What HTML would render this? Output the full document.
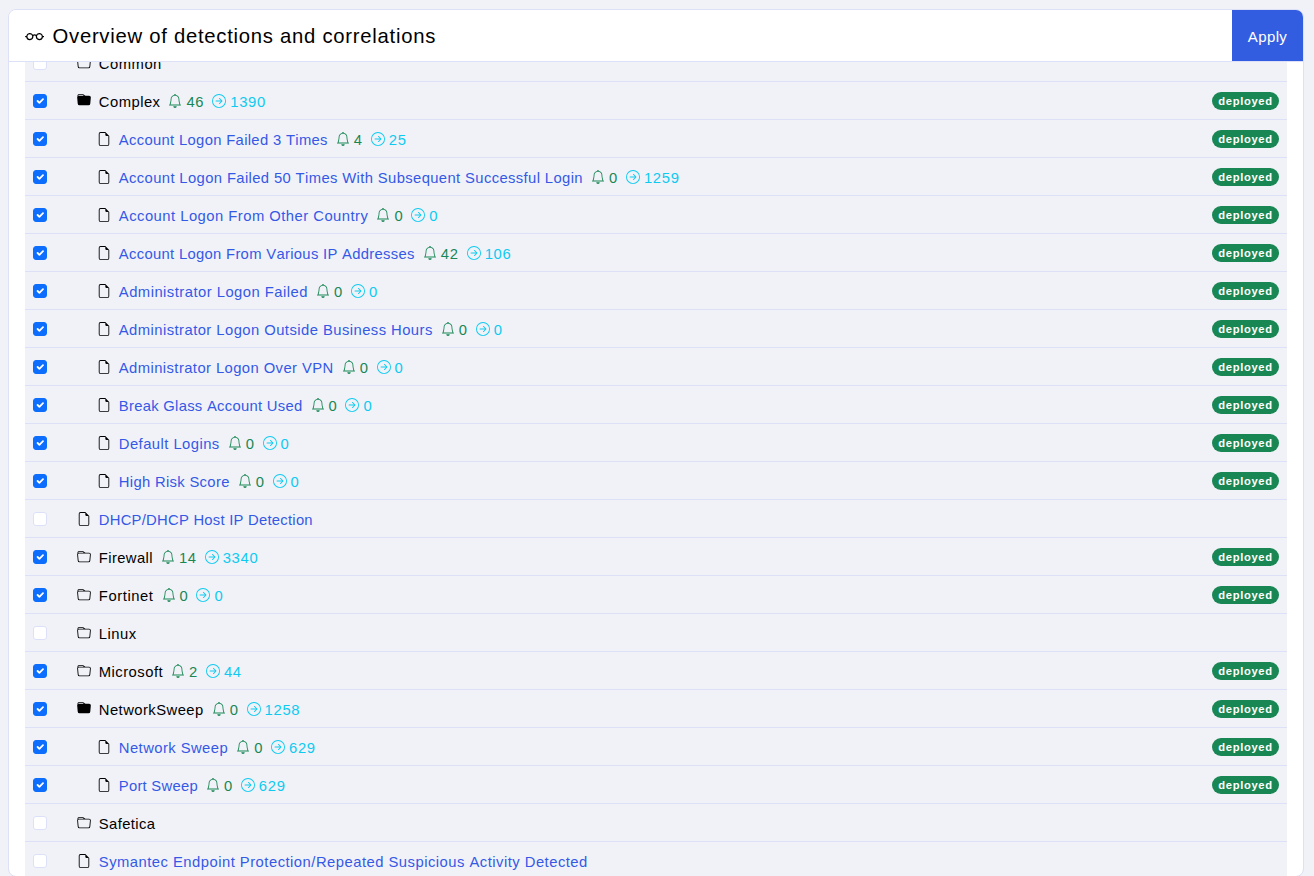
<!DOCTYPE html>
<html><head><meta charset="utf-8"><title>Overview of detections and correlations</title>
<style>
html,body{margin:0;padding:0;}
body{width:1314px;height:876px;overflow:hidden;background:#f1f2f8;position:relative;font-family:"Liberation Sans",sans-serif;}
.t{position:absolute;white-space:pre;line-height:20px;font-kerning:none;font-family:"Liberation Sans",sans-serif;}
.i{position:absolute;display:block;}
.card{position:absolute;left:8px;top:9px;width:1294px;height:866px;border:1px solid #dde1f7;border-radius:8px;background:#fff;background-clip:padding-box;overflow:hidden;}
.row{position:absolute;left:25px;width:1262px;height:37px;border-top:1px solid #dde1f7;background:#f1f2f8;}
.cb{position:absolute;left:33px;width:12px;height:12px;border:1px solid #dde1f7;border-radius:3px;background:#fff;}
.cb.on{background:#0d6efd;border-color:#0d6efd;}
.cb svg{position:absolute;left:0;top:0;width:12px;height:12px;}
.badge{position:absolute;left:1212px;width:67px;height:18px;border-radius:9px;background:#198754;}
.hdr{position:absolute;left:9px;top:10px;width:1294px;height:51px;background:#fff;border-bottom:1px solid #dde1f7;border-top-left-radius:7px;border-top-right-radius:7px;}
.apply{position:absolute;left:1232px;top:10px;width:71px;height:51px;background:#335de0;border-top-right-radius:7px;}
</style></head><body>
<div class="card"></div>

<div class="row" style="top:43px"></div>
<div class="cb" style="top:56px"></div>
<svg class="i" style="left:77.20px;top:56.00px;width:14px;height:14px" viewBox="0 0 16 16" fill="#000"><path d="M.54 3.87.5 3a2 2 0 0 1 2-2h3.672a2 2 0 0 1 1.414.586l.828.828A2 2 0 0 0 9.828 3h3.982a2 2 0 0 1 1.992 2.181l-.637 7A2 2 0 0 1 13.174 14H2.826a2 2 0 0 1-1.991-1.819l-.637-7a2 2 0 0 1 .342-1.31zM2.19 4a1 1 0 0 0-.996 1.09l.637 7a1 1 0 0 0 .995.91h10.348a1 1 0 0 0 .995-.91l.637-7A1 1 0 0 0 13.81 4zm4.69-1.707A1 1 0 0 0 6.172 2H2.5a1 1 0 0 0-1 .981l.006.139q.323-.119.684-.12h5.396z"/></svg>
<span class="t" style="left:98.80px;top:54px;font-size:14.8px;font-weight:400;letter-spacing:0.503px;color:#000;">Common</span>
<div class="row" style="top:81px"></div>
<div class="cb on" style="top:94px"><svg viewBox="0 0 20 20"><path fill="none" stroke="#fff" stroke-linecap="round" stroke-linejoin="round" stroke-width="3" d="m6 10 3 3 6-6"/></svg></div>
<svg class="i" style="left:77.20px;top:93.40px;width:14px;height:14px" viewBox="0 0 16 16" fill="#000"><path d="M9.828 3h3.982a2 2 0 0 1 1.992 2.181l-.637 7A2 2 0 0 1 13.174 14H2.825a2 2 0 0 1-1.991-1.819l-.637-7a2 2 0 0 1 .342-1.31L.5 3a2 2 0 0 1 2-2h3.672a2 2 0 0 1 1.414.586l.828.828A2 2 0 0 0 9.828 3m-8.322.12q.322-.119.684-.12h5.396l-.707-.707A1 1 0 0 0 6.172 2H2.5a1 1 0 0 0-1 .981z"/></svg>
<span class="t" style="left:98.80px;top:92px;font-size:14.8px;font-weight:400;letter-spacing:0.465px;color:#000;">Complex</span>
<svg class="i" style="left:168.45px;top:94.00px;width:14px;height:14px" viewBox="0 0 16 16" fill="#198754"><path d="M8 16a2 2 0 0 0 2-2H6a2 2 0 0 0 2 2M8 1.918l-.797.161A4 4 0 0 0 4 6c0 .628-.134 2.197-.459 3.742-.16.767-.376 1.566-.663 2.258h10.244c-.287-.692-.502-1.49-.663-2.258C12.134 8.197 12 6.628 12 6a4 4 0 0 0-3.203-3.92zM14.22 12c.223.447.481.801.78 1H1c.299-.199.557-.553.78-1C2.68 10.2 3 6.88 3 6c0-2.42 1.72-4.44 4.005-4.901a1 1 0 1 1 1.99 0A5 5 0 0 1 13 6c0 .88.32 4.2 1.22 6"/></svg>
<span class="t" style="left:186.45px;top:92px;font-size:14.8px;font-weight:400;letter-spacing:0.676px;color:#198754;">46</span>
<svg class="i" style="left:212.27px;top:94.00px;width:14px;height:14px" viewBox="0 0 16 16" fill="#0dcaf0"><path fill-rule="evenodd" d="M1 8a7 7 0 1 0 14 0A7 7 0 0 0 1 8m15 0A8 8 0 1 1 0 8a8 8 0 0 1 16 0M4.5 7.5a.5.5 0 0 0 0 1h5.793l-2.147 2.146a.5.5 0 0 0 .708.708l3-3a.5.5 0 0 0 0-.708l-3-3a.5.5 0 1 0-.708.708L10.293 7.5z"/></svg>
<span class="t" style="left:230.27px;top:92px;font-size:14.8px;font-weight:400;letter-spacing:0.676px;color:#0dcaf0;">1390</span>
<div class="badge" style="top:92px"></div>
<span class="t" style="left:1218.28px;top:91px;font-size:11.2px;font-weight:700;letter-spacing:0.661px;color:#fff;">deployed</span>
<div class="row" style="top:119px"></div>
<div class="cb on" style="top:132px"><svg viewBox="0 0 20 20"><path fill="none" stroke="#fff" stroke-linecap="round" stroke-linejoin="round" stroke-width="3" d="m6 10 3 3 6-6"/></svg></div>
<svg class="i" style="left:97.20px;top:132.00px;width:14px;height:14px" viewBox="0 0 16 16" fill="#000"><path d="M14 4.5V14a2 2 0 0 1-2 2H4a2 2 0 0 1-2-2V2a2 2 0 0 1 2-2h5.5zm-3 0A1.5 1.5 0 0 1 9.5 3V1H4a1 1 0 0 0-1 1v12a1 1 0 0 0 1 1h8a1 1 0 0 0 1-1V4.5z"/></svg>
<span class="t" style="left:118.80px;top:130px;font-size:14.8px;font-weight:400;letter-spacing:0.327px;color:#3459e6;">Account Logon Failed 3 Times</span>
<svg class="i" style="left:335.87px;top:132.00px;width:14px;height:14px" viewBox="0 0 16 16" fill="#198754"><path d="M8 16a2 2 0 0 0 2-2H6a2 2 0 0 0 2 2M8 1.918l-.797.161A4 4 0 0 0 4 6c0 .628-.134 2.197-.459 3.742-.16.767-.376 1.566-.663 2.258h10.244c-.287-.692-.502-1.49-.663-2.258C12.134 8.197 12 6.628 12 6a4 4 0 0 0-3.203-3.92zM14.22 12c.223.447.481.801.78 1H1c.299-.199.557-.553.78-1C2.68 10.2 3 6.88 3 6c0-2.42 1.72-4.44 4.005-4.901a1 1 0 1 1 1.99 0A5 5 0 0 1 13 6c0 .88.32 4.2 1.22 6"/></svg>
<span class="t" style="left:353.87px;top:130px;font-size:14.8px;font-weight:400;letter-spacing:0.676px;color:#198754;">4</span>
<svg class="i" style="left:370.78px;top:132.00px;width:14px;height:14px" viewBox="0 0 16 16" fill="#0dcaf0"><path fill-rule="evenodd" d="M1 8a7 7 0 1 0 14 0A7 7 0 0 0 1 8m15 0A8 8 0 1 1 0 8a8 8 0 0 1 16 0M4.5 7.5a.5.5 0 0 0 0 1h5.793l-2.147 2.146a.5.5 0 0 0 .708.708l3-3a.5.5 0 0 0 0-.708l-3-3a.5.5 0 1 0-.708.708L10.293 7.5z"/></svg>
<span class="t" style="left:388.78px;top:130px;font-size:14.8px;font-weight:400;letter-spacing:0.676px;color:#0dcaf0;">25</span>
<div class="badge" style="top:130px"></div>
<span class="t" style="left:1218.28px;top:129px;font-size:11.2px;font-weight:700;letter-spacing:0.661px;color:#fff;">deployed</span>
<div class="row" style="top:157px"></div>
<div class="cb on" style="top:170px"><svg viewBox="0 0 20 20"><path fill="none" stroke="#fff" stroke-linecap="round" stroke-linejoin="round" stroke-width="3" d="m6 10 3 3 6-6"/></svg></div>
<svg class="i" style="left:97.20px;top:170.00px;width:14px;height:14px" viewBox="0 0 16 16" fill="#000"><path d="M14 4.5V14a2 2 0 0 1-2 2H4a2 2 0 0 1-2-2V2a2 2 0 0 1 2-2h5.5zm-3 0A1.5 1.5 0 0 1 9.5 3V1H4a1 1 0 0 0-1 1v12a1 1 0 0 0 1 1h8a1 1 0 0 0 1-1V4.5z"/></svg>
<span class="t" style="left:118.80px;top:168px;font-size:14.8px;font-weight:400;letter-spacing:0.375px;color:#3459e6;">Account Logon Failed 50 Times With Subsequent Successful Login</span>
<svg class="i" style="left:591.02px;top:170.00px;width:14px;height:14px" viewBox="0 0 16 16" fill="#198754"><path d="M8 16a2 2 0 0 0 2-2H6a2 2 0 0 0 2 2M8 1.918l-.797.161A4 4 0 0 0 4 6c0 .628-.134 2.197-.459 3.742-.16.767-.376 1.566-.663 2.258h10.244c-.287-.692-.502-1.49-.663-2.258C12.134 8.197 12 6.628 12 6a4 4 0 0 0-3.203-3.92zM14.22 12c.223.447.481.801.78 1H1c.299-.199.557-.553.78-1C2.68 10.2 3 6.88 3 6c0-2.42 1.72-4.44 4.005-4.901a1 1 0 1 1 1.99 0A5 5 0 0 1 13 6c0 .88.32 4.2 1.22 6"/></svg>
<span class="t" style="left:609.02px;top:168px;font-size:14.8px;font-weight:400;letter-spacing:0.676px;color:#198754;">0</span>
<svg class="i" style="left:625.93px;top:170.00px;width:14px;height:14px" viewBox="0 0 16 16" fill="#0dcaf0"><path fill-rule="evenodd" d="M1 8a7 7 0 1 0 14 0A7 7 0 0 0 1 8m15 0A8 8 0 1 1 0 8a8 8 0 0 1 16 0M4.5 7.5a.5.5 0 0 0 0 1h5.793l-2.147 2.146a.5.5 0 0 0 .708.708l3-3a.5.5 0 0 0 0-.708l-3-3a.5.5 0 1 0-.708.708L10.293 7.5z"/></svg>
<span class="t" style="left:643.93px;top:168px;font-size:14.8px;font-weight:400;letter-spacing:0.676px;color:#0dcaf0;">1259</span>
<div class="badge" style="top:168px"></div>
<span class="t" style="left:1218.28px;top:167px;font-size:11.2px;font-weight:700;letter-spacing:0.661px;color:#fff;">deployed</span>
<div class="row" style="top:195px"></div>
<div class="cb on" style="top:208px"><svg viewBox="0 0 20 20"><path fill="none" stroke="#fff" stroke-linecap="round" stroke-linejoin="round" stroke-width="3" d="m6 10 3 3 6-6"/></svg></div>
<svg class="i" style="left:97.20px;top:208.00px;width:14px;height:14px" viewBox="0 0 16 16" fill="#000"><path d="M14 4.5V14a2 2 0 0 1-2 2H4a2 2 0 0 1-2-2V2a2 2 0 0 1 2-2h5.5zm-3 0A1.5 1.5 0 0 1 9.5 3V1H4a1 1 0 0 0-1 1v12a1 1 0 0 0 1 1h8a1 1 0 0 0 1-1V4.5z"/></svg>
<span class="t" style="left:118.80px;top:206px;font-size:14.8px;font-weight:400;letter-spacing:0.475px;color:#3459e6;">Account Logon From Other Country</span>
<svg class="i" style="left:376.44px;top:208.00px;width:14px;height:14px" viewBox="0 0 16 16" fill="#198754"><path d="M8 16a2 2 0 0 0 2-2H6a2 2 0 0 0 2 2M8 1.918l-.797.161A4 4 0 0 0 4 6c0 .628-.134 2.197-.459 3.742-.16.767-.376 1.566-.663 2.258h10.244c-.287-.692-.502-1.49-.663-2.258C12.134 8.197 12 6.628 12 6a4 4 0 0 0-3.203-3.92zM14.22 12c.223.447.481.801.78 1H1c.299-.199.557-.553.78-1C2.68 10.2 3 6.88 3 6c0-2.42 1.72-4.44 4.005-4.901a1 1 0 1 1 1.99 0A5 5 0 0 1 13 6c0 .88.32 4.2 1.22 6"/></svg>
<span class="t" style="left:394.44px;top:206px;font-size:14.8px;font-weight:400;letter-spacing:0.676px;color:#198754;">0</span>
<svg class="i" style="left:411.35px;top:208.00px;width:14px;height:14px" viewBox="0 0 16 16" fill="#0dcaf0"><path fill-rule="evenodd" d="M1 8a7 7 0 1 0 14 0A7 7 0 0 0 1 8m15 0A8 8 0 1 1 0 8a8 8 0 0 1 16 0M4.5 7.5a.5.5 0 0 0 0 1h5.793l-2.147 2.146a.5.5 0 0 0 .708.708l3-3a.5.5 0 0 0 0-.708l-3-3a.5.5 0 1 0-.708.708L10.293 7.5z"/></svg>
<span class="t" style="left:429.35px;top:206px;font-size:14.8px;font-weight:400;letter-spacing:0.676px;color:#0dcaf0;">0</span>
<div class="badge" style="top:206px"></div>
<span class="t" style="left:1218.28px;top:205px;font-size:11.2px;font-weight:700;letter-spacing:0.661px;color:#fff;">deployed</span>
<div class="row" style="top:233px"></div>
<div class="cb on" style="top:246px"><svg viewBox="0 0 20 20"><path fill="none" stroke="#fff" stroke-linecap="round" stroke-linejoin="round" stroke-width="3" d="m6 10 3 3 6-6"/></svg></div>
<svg class="i" style="left:97.20px;top:246.00px;width:14px;height:14px" viewBox="0 0 16 16" fill="#000"><path d="M14 4.5V14a2 2 0 0 1-2 2H4a2 2 0 0 1-2-2V2a2 2 0 0 1 2-2h5.5zm-3 0A1.5 1.5 0 0 1 9.5 3V1H4a1 1 0 0 0-1 1v12a1 1 0 0 0 1 1h8a1 1 0 0 0 1-1V4.5z"/></svg>
<span class="t" style="left:118.80px;top:244px;font-size:14.8px;font-weight:400;letter-spacing:0.314px;color:#3459e6;">Account Logon From Various IP Addresses</span>
<svg class="i" style="left:422.85px;top:246.00px;width:14px;height:14px" viewBox="0 0 16 16" fill="#198754"><path d="M8 16a2 2 0 0 0 2-2H6a2 2 0 0 0 2 2M8 1.918l-.797.161A4 4 0 0 0 4 6c0 .628-.134 2.197-.459 3.742-.16.767-.376 1.566-.663 2.258h10.244c-.287-.692-.502-1.49-.663-2.258C12.134 8.197 12 6.628 12 6a4 4 0 0 0-3.203-3.92zM14.22 12c.223.447.481.801.78 1H1c.299-.199.557-.553.78-1C2.68 10.2 3 6.88 3 6c0-2.42 1.72-4.44 4.005-4.901a1 1 0 1 1 1.99 0A5 5 0 0 1 13 6c0 .88.32 4.2 1.22 6"/></svg>
<span class="t" style="left:440.85px;top:244px;font-size:14.8px;font-weight:400;letter-spacing:0.676px;color:#198754;">42</span>
<svg class="i" style="left:466.66px;top:246.00px;width:14px;height:14px" viewBox="0 0 16 16" fill="#0dcaf0"><path fill-rule="evenodd" d="M1 8a7 7 0 1 0 14 0A7 7 0 0 0 1 8m15 0A8 8 0 1 1 0 8a8 8 0 0 1 16 0M4.5 7.5a.5.5 0 0 0 0 1h5.793l-2.147 2.146a.5.5 0 0 0 .708.708l3-3a.5.5 0 0 0 0-.708l-3-3a.5.5 0 1 0-.708.708L10.293 7.5z"/></svg>
<span class="t" style="left:484.66px;top:244px;font-size:14.8px;font-weight:400;letter-spacing:0.676px;color:#0dcaf0;">106</span>
<div class="badge" style="top:244px"></div>
<span class="t" style="left:1218.28px;top:243px;font-size:11.2px;font-weight:700;letter-spacing:0.661px;color:#fff;">deployed</span>
<div class="row" style="top:271px"></div>
<div class="cb on" style="top:284px"><svg viewBox="0 0 20 20"><path fill="none" stroke="#fff" stroke-linecap="round" stroke-linejoin="round" stroke-width="3" d="m6 10 3 3 6-6"/></svg></div>
<svg class="i" style="left:97.20px;top:284.00px;width:14px;height:14px" viewBox="0 0 16 16" fill="#000"><path d="M14 4.5V14a2 2 0 0 1-2 2H4a2 2 0 0 1-2-2V2a2 2 0 0 1 2-2h5.5zm-3 0A1.5 1.5 0 0 1 9.5 3V1H4a1 1 0 0 0-1 1v12a1 1 0 0 0 1 1h8a1 1 0 0 0 1-1V4.5z"/></svg>
<span class="t" style="left:118.80px;top:282px;font-size:14.8px;font-weight:400;letter-spacing:0.474px;color:#3459e6;">Administrator Logon Failed</span>
<svg class="i" style="left:315.98px;top:284.00px;width:14px;height:14px" viewBox="0 0 16 16" fill="#198754"><path d="M8 16a2 2 0 0 0 2-2H6a2 2 0 0 0 2 2M8 1.918l-.797.161A4 4 0 0 0 4 6c0 .628-.134 2.197-.459 3.742-.16.767-.376 1.566-.663 2.258h10.244c-.287-.692-.502-1.49-.663-2.258C12.134 8.197 12 6.628 12 6a4 4 0 0 0-3.203-3.92zM14.22 12c.223.447.481.801.78 1H1c.299-.199.557-.553.78-1C2.68 10.2 3 6.88 3 6c0-2.42 1.72-4.44 4.005-4.901a1 1 0 1 1 1.99 0A5 5 0 0 1 13 6c0 .88.32 4.2 1.22 6"/></svg>
<span class="t" style="left:333.98px;top:282px;font-size:14.8px;font-weight:400;letter-spacing:0.676px;color:#198754;">0</span>
<svg class="i" style="left:350.89px;top:284.00px;width:14px;height:14px" viewBox="0 0 16 16" fill="#0dcaf0"><path fill-rule="evenodd" d="M1 8a7 7 0 1 0 14 0A7 7 0 0 0 1 8m15 0A8 8 0 1 1 0 8a8 8 0 0 1 16 0M4.5 7.5a.5.5 0 0 0 0 1h5.793l-2.147 2.146a.5.5 0 0 0 .708.708l3-3a.5.5 0 0 0 0-.708l-3-3a.5.5 0 1 0-.708.708L10.293 7.5z"/></svg>
<span class="t" style="left:368.89px;top:282px;font-size:14.8px;font-weight:400;letter-spacing:0.676px;color:#0dcaf0;">0</span>
<div class="badge" style="top:282px"></div>
<span class="t" style="left:1218.28px;top:281px;font-size:11.2px;font-weight:700;letter-spacing:0.661px;color:#fff;">deployed</span>
<div class="row" style="top:309px"></div>
<div class="cb on" style="top:322px"><svg viewBox="0 0 20 20"><path fill="none" stroke="#fff" stroke-linecap="round" stroke-linejoin="round" stroke-width="3" d="m6 10 3 3 6-6"/></svg></div>
<svg class="i" style="left:97.20px;top:322.00px;width:14px;height:14px" viewBox="0 0 16 16" fill="#000"><path d="M14 4.5V14a2 2 0 0 1-2 2H4a2 2 0 0 1-2-2V2a2 2 0 0 1 2-2h5.5zm-3 0A1.5 1.5 0 0 1 9.5 3V1H4a1 1 0 0 0-1 1v12a1 1 0 0 0 1 1h8a1 1 0 0 0 1-1V4.5z"/></svg>
<span class="t" style="left:118.80px;top:320px;font-size:14.8px;font-weight:400;letter-spacing:0.445px;color:#3459e6;">Administrator Logon Outside Business Hours</span>
<svg class="i" style="left:440.79px;top:322.00px;width:14px;height:14px" viewBox="0 0 16 16" fill="#198754"><path d="M8 16a2 2 0 0 0 2-2H6a2 2 0 0 0 2 2M8 1.918l-.797.161A4 4 0 0 0 4 6c0 .628-.134 2.197-.459 3.742-.16.767-.376 1.566-.663 2.258h10.244c-.287-.692-.502-1.49-.663-2.258C12.134 8.197 12 6.628 12 6a4 4 0 0 0-3.203-3.92zM14.22 12c.223.447.481.801.78 1H1c.299-.199.557-.553.78-1C2.68 10.2 3 6.88 3 6c0-2.42 1.72-4.44 4.005-4.901a1 1 0 1 1 1.99 0A5 5 0 0 1 13 6c0 .88.32 4.2 1.22 6"/></svg>
<span class="t" style="left:458.79px;top:320px;font-size:14.8px;font-weight:400;letter-spacing:0.676px;color:#198754;">0</span>
<svg class="i" style="left:475.70px;top:322.00px;width:14px;height:14px" viewBox="0 0 16 16" fill="#0dcaf0"><path fill-rule="evenodd" d="M1 8a7 7 0 1 0 14 0A7 7 0 0 0 1 8m15 0A8 8 0 1 1 0 8a8 8 0 0 1 16 0M4.5 7.5a.5.5 0 0 0 0 1h5.793l-2.147 2.146a.5.5 0 0 0 .708.708l3-3a.5.5 0 0 0 0-.708l-3-3a.5.5 0 1 0-.708.708L10.293 7.5z"/></svg>
<span class="t" style="left:493.70px;top:320px;font-size:14.8px;font-weight:400;letter-spacing:0.676px;color:#0dcaf0;">0</span>
<div class="badge" style="top:320px"></div>
<span class="t" style="left:1218.28px;top:319px;font-size:11.2px;font-weight:700;letter-spacing:0.661px;color:#fff;">deployed</span>
<div class="row" style="top:347px"></div>
<div class="cb on" style="top:360px"><svg viewBox="0 0 20 20"><path fill="none" stroke="#fff" stroke-linecap="round" stroke-linejoin="round" stroke-width="3" d="m6 10 3 3 6-6"/></svg></div>
<svg class="i" style="left:97.20px;top:360.00px;width:14px;height:14px" viewBox="0 0 16 16" fill="#000"><path d="M14 4.5V14a2 2 0 0 1-2 2H4a2 2 0 0 1-2-2V2a2 2 0 0 1 2-2h5.5zm-3 0A1.5 1.5 0 0 1 9.5 3V1H4a1 1 0 0 0-1 1v12a1 1 0 0 0 1 1h8a1 1 0 0 0 1-1V4.5z"/></svg>
<span class="t" style="left:118.80px;top:358px;font-size:14.8px;font-weight:400;letter-spacing:0.418px;color:#3459e6;">Administrator Logon Over VPN</span>
<svg class="i" style="left:341.69px;top:360.00px;width:14px;height:14px" viewBox="0 0 16 16" fill="#198754"><path d="M8 16a2 2 0 0 0 2-2H6a2 2 0 0 0 2 2M8 1.918l-.797.161A4 4 0 0 0 4 6c0 .628-.134 2.197-.459 3.742-.16.767-.376 1.566-.663 2.258h10.244c-.287-.692-.502-1.49-.663-2.258C12.134 8.197 12 6.628 12 6a4 4 0 0 0-3.203-3.92zM14.22 12c.223.447.481.801.78 1H1c.299-.199.557-.553.78-1C2.68 10.2 3 6.88 3 6c0-2.42 1.72-4.44 4.005-4.901a1 1 0 1 1 1.99 0A5 5 0 0 1 13 6c0 .88.32 4.2 1.22 6"/></svg>
<span class="t" style="left:359.69px;top:358px;font-size:14.8px;font-weight:400;letter-spacing:0.676px;color:#198754;">0</span>
<svg class="i" style="left:376.60px;top:360.00px;width:14px;height:14px" viewBox="0 0 16 16" fill="#0dcaf0"><path fill-rule="evenodd" d="M1 8a7 7 0 1 0 14 0A7 7 0 0 0 1 8m15 0A8 8 0 1 1 0 8a8 8 0 0 1 16 0M4.5 7.5a.5.5 0 0 0 0 1h5.793l-2.147 2.146a.5.5 0 0 0 .708.708l3-3a.5.5 0 0 0 0-.708l-3-3a.5.5 0 1 0-.708.708L10.293 7.5z"/></svg>
<span class="t" style="left:394.60px;top:358px;font-size:14.8px;font-weight:400;letter-spacing:0.676px;color:#0dcaf0;">0</span>
<div class="badge" style="top:358px"></div>
<span class="t" style="left:1218.28px;top:357px;font-size:11.2px;font-weight:700;letter-spacing:0.661px;color:#fff;">deployed</span>
<div class="row" style="top:385px"></div>
<div class="cb on" style="top:398px"><svg viewBox="0 0 20 20"><path fill="none" stroke="#fff" stroke-linecap="round" stroke-linejoin="round" stroke-width="3" d="m6 10 3 3 6-6"/></svg></div>
<svg class="i" style="left:97.20px;top:398.00px;width:14px;height:14px" viewBox="0 0 16 16" fill="#000"><path d="M14 4.5V14a2 2 0 0 1-2 2H4a2 2 0 0 1-2-2V2a2 2 0 0 1 2-2h5.5zm-3 0A1.5 1.5 0 0 1 9.5 3V1H4a1 1 0 0 0-1 1v12a1 1 0 0 0 1 1h8a1 1 0 0 0 1-1V4.5z"/></svg>
<span class="t" style="left:118.80px;top:396px;font-size:14.8px;font-weight:400;letter-spacing:0.286px;color:#3459e6;">Break Glass Account Used</span>
<svg class="i" style="left:310.53px;top:398.00px;width:14px;height:14px" viewBox="0 0 16 16" fill="#198754"><path d="M8 16a2 2 0 0 0 2-2H6a2 2 0 0 0 2 2M8 1.918l-.797.161A4 4 0 0 0 4 6c0 .628-.134 2.197-.459 3.742-.16.767-.376 1.566-.663 2.258h10.244c-.287-.692-.502-1.49-.663-2.258C12.134 8.197 12 6.628 12 6a4 4 0 0 0-3.203-3.92zM14.22 12c.223.447.481.801.78 1H1c.299-.199.557-.553.78-1C2.68 10.2 3 6.88 3 6c0-2.42 1.72-4.44 4.005-4.901a1 1 0 1 1 1.99 0A5 5 0 0 1 13 6c0 .88.32 4.2 1.22 6"/></svg>
<span class="t" style="left:328.53px;top:396px;font-size:14.8px;font-weight:400;letter-spacing:0.676px;color:#198754;">0</span>
<svg class="i" style="left:345.44px;top:398.00px;width:14px;height:14px" viewBox="0 0 16 16" fill="#0dcaf0"><path fill-rule="evenodd" d="M1 8a7 7 0 1 0 14 0A7 7 0 0 0 1 8m15 0A8 8 0 1 1 0 8a8 8 0 0 1 16 0M4.5 7.5a.5.5 0 0 0 0 1h5.793l-2.147 2.146a.5.5 0 0 0 .708.708l3-3a.5.5 0 0 0 0-.708l-3-3a.5.5 0 1 0-.708.708L10.293 7.5z"/></svg>
<span class="t" style="left:363.44px;top:396px;font-size:14.8px;font-weight:400;letter-spacing:0.676px;color:#0dcaf0;">0</span>
<div class="badge" style="top:396px"></div>
<span class="t" style="left:1218.28px;top:395px;font-size:11.2px;font-weight:700;letter-spacing:0.661px;color:#fff;">deployed</span>
<div class="row" style="top:423px"></div>
<div class="cb on" style="top:436px"><svg viewBox="0 0 20 20"><path fill="none" stroke="#fff" stroke-linecap="round" stroke-linejoin="round" stroke-width="3" d="m6 10 3 3 6-6"/></svg></div>
<svg class="i" style="left:97.20px;top:436.00px;width:14px;height:14px" viewBox="0 0 16 16" fill="#000"><path d="M14 4.5V14a2 2 0 0 1-2 2H4a2 2 0 0 1-2-2V2a2 2 0 0 1 2-2h5.5zm-3 0A1.5 1.5 0 0 1 9.5 3V1H4a1 1 0 0 0-1 1v12a1 1 0 0 0 1 1h8a1 1 0 0 0 1-1V4.5z"/></svg>
<span class="t" style="left:118.80px;top:434px;font-size:14.8px;font-weight:400;letter-spacing:0.450px;color:#3459e6;">Default Logins</span>
<svg class="i" style="left:227.71px;top:436.00px;width:14px;height:14px" viewBox="0 0 16 16" fill="#198754"><path d="M8 16a2 2 0 0 0 2-2H6a2 2 0 0 0 2 2M8 1.918l-.797.161A4 4 0 0 0 4 6c0 .628-.134 2.197-.459 3.742-.16.767-.376 1.566-.663 2.258h10.244c-.287-.692-.502-1.49-.663-2.258C12.134 8.197 12 6.628 12 6a4 4 0 0 0-3.203-3.92zM14.22 12c.223.447.481.801.78 1H1c.299-.199.557-.553.78-1C2.68 10.2 3 6.88 3 6c0-2.42 1.72-4.44 4.005-4.901a1 1 0 1 1 1.99 0A5 5 0 0 1 13 6c0 .88.32 4.2 1.22 6"/></svg>
<span class="t" style="left:245.71px;top:434px;font-size:14.8px;font-weight:400;letter-spacing:0.676px;color:#198754;">0</span>
<svg class="i" style="left:262.62px;top:436.00px;width:14px;height:14px" viewBox="0 0 16 16" fill="#0dcaf0"><path fill-rule="evenodd" d="M1 8a7 7 0 1 0 14 0A7 7 0 0 0 1 8m15 0A8 8 0 1 1 0 8a8 8 0 0 1 16 0M4.5 7.5a.5.5 0 0 0 0 1h5.793l-2.147 2.146a.5.5 0 0 0 .708.708l3-3a.5.5 0 0 0 0-.708l-3-3a.5.5 0 1 0-.708.708L10.293 7.5z"/></svg>
<span class="t" style="left:280.62px;top:434px;font-size:14.8px;font-weight:400;letter-spacing:0.676px;color:#0dcaf0;">0</span>
<div class="badge" style="top:434px"></div>
<span class="t" style="left:1218.28px;top:433px;font-size:11.2px;font-weight:700;letter-spacing:0.661px;color:#fff;">deployed</span>
<div class="row" style="top:461px"></div>
<div class="cb on" style="top:474px"><svg viewBox="0 0 20 20"><path fill="none" stroke="#fff" stroke-linecap="round" stroke-linejoin="round" stroke-width="3" d="m6 10 3 3 6-6"/></svg></div>
<svg class="i" style="left:97.20px;top:474.00px;width:14px;height:14px" viewBox="0 0 16 16" fill="#000"><path d="M14 4.5V14a2 2 0 0 1-2 2H4a2 2 0 0 1-2-2V2a2 2 0 0 1 2-2h5.5zm-3 0A1.5 1.5 0 0 1 9.5 3V1H4a1 1 0 0 0-1 1v12a1 1 0 0 0 1 1h8a1 1 0 0 0 1-1V4.5z"/></svg>
<span class="t" style="left:118.80px;top:472px;font-size:14.8px;font-weight:400;letter-spacing:0.321px;color:#3459e6;">High Risk Score</span>
<svg class="i" style="left:237.71px;top:474.00px;width:14px;height:14px" viewBox="0 0 16 16" fill="#198754"><path d="M8 16a2 2 0 0 0 2-2H6a2 2 0 0 0 2 2M8 1.918l-.797.161A4 4 0 0 0 4 6c0 .628-.134 2.197-.459 3.742-.16.767-.376 1.566-.663 2.258h10.244c-.287-.692-.502-1.49-.663-2.258C12.134 8.197 12 6.628 12 6a4 4 0 0 0-3.203-3.92zM14.22 12c.223.447.481.801.78 1H1c.299-.199.557-.553.78-1C2.68 10.2 3 6.88 3 6c0-2.42 1.72-4.44 4.005-4.901a1 1 0 1 1 1.99 0A5 5 0 0 1 13 6c0 .88.32 4.2 1.22 6"/></svg>
<span class="t" style="left:255.71px;top:472px;font-size:14.8px;font-weight:400;letter-spacing:0.676px;color:#198754;">0</span>
<svg class="i" style="left:272.62px;top:474.00px;width:14px;height:14px" viewBox="0 0 16 16" fill="#0dcaf0"><path fill-rule="evenodd" d="M1 8a7 7 0 1 0 14 0A7 7 0 0 0 1 8m15 0A8 8 0 1 1 0 8a8 8 0 0 1 16 0M4.5 7.5a.5.5 0 0 0 0 1h5.793l-2.147 2.146a.5.5 0 0 0 .708.708l3-3a.5.5 0 0 0 0-.708l-3-3a.5.5 0 1 0-.708.708L10.293 7.5z"/></svg>
<span class="t" style="left:290.62px;top:472px;font-size:14.8px;font-weight:400;letter-spacing:0.676px;color:#0dcaf0;">0</span>
<div class="badge" style="top:472px"></div>
<span class="t" style="left:1218.28px;top:471px;font-size:11.2px;font-weight:700;letter-spacing:0.661px;color:#fff;">deployed</span>
<div class="row" style="top:499px"></div>
<div class="cb" style="top:512px"></div>
<svg class="i" style="left:77.20px;top:512.00px;width:14px;height:14px" viewBox="0 0 16 16" fill="#000"><path d="M14 4.5V14a2 2 0 0 1-2 2H4a2 2 0 0 1-2-2V2a2 2 0 0 1 2-2h5.5zm-3 0A1.5 1.5 0 0 1 9.5 3V1H4a1 1 0 0 0-1 1v12a1 1 0 0 0 1 1h8a1 1 0 0 0 1-1V4.5z"/></svg>
<span class="t" style="left:98.80px;top:510px;font-size:14.8px;font-weight:400;letter-spacing:0.253px;color:#3459e6;">DHCP/DHCP Host IP Detection</span>
<div class="row" style="top:537px"></div>
<div class="cb on" style="top:550px"><svg viewBox="0 0 20 20"><path fill="none" stroke="#fff" stroke-linecap="round" stroke-linejoin="round" stroke-width="3" d="m6 10 3 3 6-6"/></svg></div>
<svg class="i" style="left:77.20px;top:550.00px;width:14px;height:14px" viewBox="0 0 16 16" fill="#000"><path d="M.54 3.87.5 3a2 2 0 0 1 2-2h3.672a2 2 0 0 1 1.414.586l.828.828A2 2 0 0 0 9.828 3h3.982a2 2 0 0 1 1.992 2.181l-.637 7A2 2 0 0 1 13.174 14H2.826a2 2 0 0 1-1.991-1.819l-.637-7a2 2 0 0 1 .342-1.31zM2.19 4a1 1 0 0 0-.996 1.09l.637 7a1 1 0 0 0 .995.91h10.348a1 1 0 0 0 .995-.91l.637-7A1 1 0 0 0 13.81 4zm4.69-1.707A1 1 0 0 0 6.172 2H2.5a1 1 0 0 0-1 .981l.006.139q.323-.119.684-.12h5.396z"/></svg>
<span class="t" style="left:98.80px;top:548px;font-size:14.8px;font-weight:400;letter-spacing:0.392px;color:#000;">Firewall</span>
<svg class="i" style="left:160.92px;top:550.00px;width:14px;height:14px" viewBox="0 0 16 16" fill="#198754"><path d="M8 16a2 2 0 0 0 2-2H6a2 2 0 0 0 2 2M8 1.918l-.797.161A4 4 0 0 0 4 6c0 .628-.134 2.197-.459 3.742-.16.767-.376 1.566-.663 2.258h10.244c-.287-.692-.502-1.49-.663-2.258C12.134 8.197 12 6.628 12 6a4 4 0 0 0-3.203-3.92zM14.22 12c.223.447.481.801.78 1H1c.299-.199.557-.553.78-1C2.68 10.2 3 6.88 3 6c0-2.42 1.72-4.44 4.005-4.901a1 1 0 1 1 1.99 0A5 5 0 0 1 13 6c0 .88.32 4.2 1.22 6"/></svg>
<span class="t" style="left:178.92px;top:548px;font-size:14.8px;font-weight:400;letter-spacing:0.676px;color:#198754;">14</span>
<svg class="i" style="left:204.73px;top:550.00px;width:14px;height:14px" viewBox="0 0 16 16" fill="#0dcaf0"><path fill-rule="evenodd" d="M1 8a7 7 0 1 0 14 0A7 7 0 0 0 1 8m15 0A8 8 0 1 1 0 8a8 8 0 0 1 16 0M4.5 7.5a.5.5 0 0 0 0 1h5.793l-2.147 2.146a.5.5 0 0 0 .708.708l3-3a.5.5 0 0 0 0-.708l-3-3a.5.5 0 1 0-.708.708L10.293 7.5z"/></svg>
<span class="t" style="left:222.73px;top:548px;font-size:14.8px;font-weight:400;letter-spacing:0.676px;color:#0dcaf0;">3340</span>
<div class="badge" style="top:548px"></div>
<span class="t" style="left:1218.28px;top:547px;font-size:11.2px;font-weight:700;letter-spacing:0.661px;color:#fff;">deployed</span>
<div class="row" style="top:575px"></div>
<div class="cb on" style="top:588px"><svg viewBox="0 0 20 20"><path fill="none" stroke="#fff" stroke-linecap="round" stroke-linejoin="round" stroke-width="3" d="m6 10 3 3 6-6"/></svg></div>
<svg class="i" style="left:77.20px;top:588.00px;width:14px;height:14px" viewBox="0 0 16 16" fill="#000"><path d="M.54 3.87.5 3a2 2 0 0 1 2-2h3.672a2 2 0 0 1 1.414.586l.828.828A2 2 0 0 0 9.828 3h3.982a2 2 0 0 1 1.992 2.181l-.637 7A2 2 0 0 1 13.174 14H2.826a2 2 0 0 1-1.991-1.819l-.637-7a2 2 0 0 1 .342-1.31zM2.19 4a1 1 0 0 0-.996 1.09l.637 7a1 1 0 0 0 .995.91h10.348a1 1 0 0 0 .995-.91l.637-7A1 1 0 0 0 13.81 4zm4.69-1.707A1 1 0 0 0 6.172 2H2.5a1 1 0 0 0-1 .981l.006.139q.323-.119.684-.12h5.396z"/></svg>
<span class="t" style="left:98.80px;top:586px;font-size:14.8px;font-weight:400;letter-spacing:0.569px;color:#000;">Fortinet</span>
<svg class="i" style="left:161.53px;top:588.00px;width:14px;height:14px" viewBox="0 0 16 16" fill="#198754"><path d="M8 16a2 2 0 0 0 2-2H6a2 2 0 0 0 2 2M8 1.918l-.797.161A4 4 0 0 0 4 6c0 .628-.134 2.197-.459 3.742-.16.767-.376 1.566-.663 2.258h10.244c-.287-.692-.502-1.49-.663-2.258C12.134 8.197 12 6.628 12 6a4 4 0 0 0-3.203-3.92zM14.22 12c.223.447.481.801.78 1H1c.299-.199.557-.553.78-1C2.68 10.2 3 6.88 3 6c0-2.42 1.72-4.44 4.005-4.901a1 1 0 1 1 1.99 0A5 5 0 0 1 13 6c0 .88.32 4.2 1.22 6"/></svg>
<span class="t" style="left:179.53px;top:586px;font-size:14.8px;font-weight:400;letter-spacing:0.676px;color:#198754;">0</span>
<svg class="i" style="left:196.44px;top:588.00px;width:14px;height:14px" viewBox="0 0 16 16" fill="#0dcaf0"><path fill-rule="evenodd" d="M1 8a7 7 0 1 0 14 0A7 7 0 0 0 1 8m15 0A8 8 0 1 1 0 8a8 8 0 0 1 16 0M4.5 7.5a.5.5 0 0 0 0 1h5.793l-2.147 2.146a.5.5 0 0 0 .708.708l3-3a.5.5 0 0 0 0-.708l-3-3a.5.5 0 1 0-.708.708L10.293 7.5z"/></svg>
<span class="t" style="left:214.44px;top:586px;font-size:14.8px;font-weight:400;letter-spacing:0.676px;color:#0dcaf0;">0</span>
<div class="badge" style="top:586px"></div>
<span class="t" style="left:1218.28px;top:585px;font-size:11.2px;font-weight:700;letter-spacing:0.661px;color:#fff;">deployed</span>
<div class="row" style="top:613px"></div>
<div class="cb" style="top:626px"></div>
<svg class="i" style="left:77.20px;top:626.00px;width:14px;height:14px" viewBox="0 0 16 16" fill="#000"><path d="M.54 3.87.5 3a2 2 0 0 1 2-2h3.672a2 2 0 0 1 1.414.586l.828.828A2 2 0 0 0 9.828 3h3.982a2 2 0 0 1 1.992 2.181l-.637 7A2 2 0 0 1 13.174 14H2.826a2 2 0 0 1-1.991-1.819l-.637-7a2 2 0 0 1 .342-1.31zM2.19 4a1 1 0 0 0-.996 1.09l.637 7a1 1 0 0 0 .995.91h10.348a1 1 0 0 0 .995-.91l.637-7A1 1 0 0 0 13.81 4zm4.69-1.707A1 1 0 0 0 6.172 2H2.5a1 1 0 0 0-1 .981l.006.139q.323-.119.684-.12h5.396z"/></svg>
<span class="t" style="left:98.80px;top:624px;font-size:14.8px;font-weight:400;letter-spacing:0.468px;color:#000;">Linux</span>
<div class="row" style="top:651px"></div>
<div class="cb on" style="top:664px"><svg viewBox="0 0 20 20"><path fill="none" stroke="#fff" stroke-linecap="round" stroke-linejoin="round" stroke-width="3" d="m6 10 3 3 6-6"/></svg></div>
<svg class="i" style="left:77.20px;top:664.00px;width:14px;height:14px" viewBox="0 0 16 16" fill="#000"><path d="M.54 3.87.5 3a2 2 0 0 1 2-2h3.672a2 2 0 0 1 1.414.586l.828.828A2 2 0 0 0 9.828 3h3.982a2 2 0 0 1 1.992 2.181l-.637 7A2 2 0 0 1 13.174 14H2.826a2 2 0 0 1-1.991-1.819l-.637-7a2 2 0 0 1 .342-1.31zM2.19 4a1 1 0 0 0-.996 1.09l.637 7a1 1 0 0 0 .995.91h10.348a1 1 0 0 0 .995-.91l.637-7A1 1 0 0 0 13.81 4zm4.69-1.707A1 1 0 0 0 6.172 2H2.5a1 1 0 0 0-1 .981l.006.139q.323-.119.684-.12h5.396z"/></svg>
<span class="t" style="left:98.80px;top:662px;font-size:14.8px;font-weight:400;letter-spacing:0.470px;color:#000;">Microsoft</span>
<svg class="i" style="left:171.06px;top:664.00px;width:14px;height:14px" viewBox="0 0 16 16" fill="#198754"><path d="M8 16a2 2 0 0 0 2-2H6a2 2 0 0 0 2 2M8 1.918l-.797.161A4 4 0 0 0 4 6c0 .628-.134 2.197-.459 3.742-.16.767-.376 1.566-.663 2.258h10.244c-.287-.692-.502-1.49-.663-2.258C12.134 8.197 12 6.628 12 6a4 4 0 0 0-3.203-3.92zM14.22 12c.223.447.481.801.78 1H1c.299-.199.557-.553.78-1C2.68 10.2 3 6.88 3 6c0-2.42 1.72-4.44 4.005-4.901a1 1 0 1 1 1.99 0A5 5 0 0 1 13 6c0 .88.32 4.2 1.22 6"/></svg>
<span class="t" style="left:189.06px;top:662px;font-size:14.8px;font-weight:400;letter-spacing:0.676px;color:#198754;">2</span>
<svg class="i" style="left:205.97px;top:664.00px;width:14px;height:14px" viewBox="0 0 16 16" fill="#0dcaf0"><path fill-rule="evenodd" d="M1 8a7 7 0 1 0 14 0A7 7 0 0 0 1 8m15 0A8 8 0 1 1 0 8a8 8 0 0 1 16 0M4.5 7.5a.5.5 0 0 0 0 1h5.793l-2.147 2.146a.5.5 0 0 0 .708.708l3-3a.5.5 0 0 0 0-.708l-3-3a.5.5 0 1 0-.708.708L10.293 7.5z"/></svg>
<span class="t" style="left:223.97px;top:662px;font-size:14.8px;font-weight:400;letter-spacing:0.676px;color:#0dcaf0;">44</span>
<div class="badge" style="top:662px"></div>
<span class="t" style="left:1218.28px;top:661px;font-size:11.2px;font-weight:700;letter-spacing:0.661px;color:#fff;">deployed</span>
<div class="row" style="top:689px"></div>
<div class="cb on" style="top:702px"><svg viewBox="0 0 20 20"><path fill="none" stroke="#fff" stroke-linecap="round" stroke-linejoin="round" stroke-width="3" d="m6 10 3 3 6-6"/></svg></div>
<svg class="i" style="left:77.20px;top:701.40px;width:14px;height:14px" viewBox="0 0 16 16" fill="#000"><path d="M9.828 3h3.982a2 2 0 0 1 1.992 2.181l-.637 7A2 2 0 0 1 13.174 14H2.825a2 2 0 0 1-1.991-1.819l-.637-7a2 2 0 0 1 .342-1.31L.5 3a2 2 0 0 1 2-2h3.672a2 2 0 0 1 1.414.586l.828.828A2 2 0 0 0 9.828 3m-8.322.12q.322-.119.684-.12h5.396l-.707-.707A1 1 0 0 0 6.172 2H2.5a1 1 0 0 0-1 .981z"/></svg>
<span class="t" style="left:98.80px;top:700px;font-size:14.8px;font-weight:400;letter-spacing:0.448px;color:#000;">NetworkSweep</span>
<svg class="i" style="left:211.70px;top:702.00px;width:14px;height:14px" viewBox="0 0 16 16" fill="#198754"><path d="M8 16a2 2 0 0 0 2-2H6a2 2 0 0 0 2 2M8 1.918l-.797.161A4 4 0 0 0 4 6c0 .628-.134 2.197-.459 3.742-.16.767-.376 1.566-.663 2.258h10.244c-.287-.692-.502-1.49-.663-2.258C12.134 8.197 12 6.628 12 6a4 4 0 0 0-3.203-3.92zM14.22 12c.223.447.481.801.78 1H1c.299-.199.557-.553.78-1C2.68 10.2 3 6.88 3 6c0-2.42 1.72-4.44 4.005-4.901a1 1 0 1 1 1.99 0A5 5 0 0 1 13 6c0 .88.32 4.2 1.22 6"/></svg>
<span class="t" style="left:229.70px;top:700px;font-size:14.8px;font-weight:400;letter-spacing:0.676px;color:#198754;">0</span>
<svg class="i" style="left:246.61px;top:702.00px;width:14px;height:14px" viewBox="0 0 16 16" fill="#0dcaf0"><path fill-rule="evenodd" d="M1 8a7 7 0 1 0 14 0A7 7 0 0 0 1 8m15 0A8 8 0 1 1 0 8a8 8 0 0 1 16 0M4.5 7.5a.5.5 0 0 0 0 1h5.793l-2.147 2.146a.5.5 0 0 0 .708.708l3-3a.5.5 0 0 0 0-.708l-3-3a.5.5 0 1 0-.708.708L10.293 7.5z"/></svg>
<span class="t" style="left:264.61px;top:700px;font-size:14.8px;font-weight:400;letter-spacing:0.676px;color:#0dcaf0;">1258</span>
<div class="badge" style="top:700px"></div>
<span class="t" style="left:1218.28px;top:699px;font-size:11.2px;font-weight:700;letter-spacing:0.661px;color:#fff;">deployed</span>
<div class="row" style="top:727px"></div>
<div class="cb on" style="top:740px"><svg viewBox="0 0 20 20"><path fill="none" stroke="#fff" stroke-linecap="round" stroke-linejoin="round" stroke-width="3" d="m6 10 3 3 6-6"/></svg></div>
<svg class="i" style="left:97.20px;top:740.00px;width:14px;height:14px" viewBox="0 0 16 16" fill="#000"><path d="M14 4.5V14a2 2 0 0 1-2 2H4a2 2 0 0 1-2-2V2a2 2 0 0 1 2-2h5.5zm-3 0A1.5 1.5 0 0 1 9.5 3V1H4a1 1 0 0 0-1 1v12a1 1 0 0 0 1 1h8a1 1 0 0 0 1-1V4.5z"/></svg>
<span class="t" style="left:118.80px;top:738px;font-size:14.8px;font-weight:400;letter-spacing:0.439px;color:#3459e6;">Network Sweep</span>
<svg class="i" style="left:236.15px;top:740.00px;width:14px;height:14px" viewBox="0 0 16 16" fill="#198754"><path d="M8 16a2 2 0 0 0 2-2H6a2 2 0 0 0 2 2M8 1.918l-.797.161A4 4 0 0 0 4 6c0 .628-.134 2.197-.459 3.742-.16.767-.376 1.566-.663 2.258h10.244c-.287-.692-.502-1.49-.663-2.258C12.134 8.197 12 6.628 12 6a4 4 0 0 0-3.203-3.92zM14.22 12c.223.447.481.801.78 1H1c.299-.199.557-.553.78-1C2.68 10.2 3 6.88 3 6c0-2.42 1.72-4.44 4.005-4.901a1 1 0 1 1 1.99 0A5 5 0 0 1 13 6c0 .88.32 4.2 1.22 6"/></svg>
<span class="t" style="left:254.15px;top:738px;font-size:14.8px;font-weight:400;letter-spacing:0.676px;color:#198754;">0</span>
<svg class="i" style="left:271.06px;top:740.00px;width:14px;height:14px" viewBox="0 0 16 16" fill="#0dcaf0"><path fill-rule="evenodd" d="M1 8a7 7 0 1 0 14 0A7 7 0 0 0 1 8m15 0A8 8 0 1 1 0 8a8 8 0 0 1 16 0M4.5 7.5a.5.5 0 0 0 0 1h5.793l-2.147 2.146a.5.5 0 0 0 .708.708l3-3a.5.5 0 0 0 0-.708l-3-3a.5.5 0 1 0-.708.708L10.293 7.5z"/></svg>
<span class="t" style="left:289.06px;top:738px;font-size:14.8px;font-weight:400;letter-spacing:0.676px;color:#0dcaf0;">629</span>
<div class="badge" style="top:738px"></div>
<span class="t" style="left:1218.28px;top:737px;font-size:11.2px;font-weight:700;letter-spacing:0.661px;color:#fff;">deployed</span>
<div class="row" style="top:765px"></div>
<div class="cb on" style="top:778px"><svg viewBox="0 0 20 20"><path fill="none" stroke="#fff" stroke-linecap="round" stroke-linejoin="round" stroke-width="3" d="m6 10 3 3 6-6"/></svg></div>
<svg class="i" style="left:97.20px;top:778.00px;width:14px;height:14px" viewBox="0 0 16 16" fill="#000"><path d="M14 4.5V14a2 2 0 0 1-2 2H4a2 2 0 0 1-2-2V2a2 2 0 0 1 2-2h5.5zm-3 0A1.5 1.5 0 0 1 9.5 3V1H4a1 1 0 0 0-1 1v12a1 1 0 0 0 1 1h8a1 1 0 0 0 1-1V4.5z"/></svg>
<span class="t" style="left:118.80px;top:776px;font-size:14.8px;font-weight:400;letter-spacing:0.265px;color:#3459e6;">Port Sweep</span>
<svg class="i" style="left:205.95px;top:778.00px;width:14px;height:14px" viewBox="0 0 16 16" fill="#198754"><path d="M8 16a2 2 0 0 0 2-2H6a2 2 0 0 0 2 2M8 1.918l-.797.161A4 4 0 0 0 4 6c0 .628-.134 2.197-.459 3.742-.16.767-.376 1.566-.663 2.258h10.244c-.287-.692-.502-1.49-.663-2.258C12.134 8.197 12 6.628 12 6a4 4 0 0 0-3.203-3.92zM14.22 12c.223.447.481.801.78 1H1c.299-.199.557-.553.78-1C2.68 10.2 3 6.88 3 6c0-2.42 1.72-4.44 4.005-4.901a1 1 0 1 1 1.99 0A5 5 0 0 1 13 6c0 .88.32 4.2 1.22 6"/></svg>
<span class="t" style="left:223.95px;top:776px;font-size:14.8px;font-weight:400;letter-spacing:0.676px;color:#198754;">0</span>
<svg class="i" style="left:240.86px;top:778.00px;width:14px;height:14px" viewBox="0 0 16 16" fill="#0dcaf0"><path fill-rule="evenodd" d="M1 8a7 7 0 1 0 14 0A7 7 0 0 0 1 8m15 0A8 8 0 1 1 0 8a8 8 0 0 1 16 0M4.5 7.5a.5.5 0 0 0 0 1h5.793l-2.147 2.146a.5.5 0 0 0 .708.708l3-3a.5.5 0 0 0 0-.708l-3-3a.5.5 0 1 0-.708.708L10.293 7.5z"/></svg>
<span class="t" style="left:258.86px;top:776px;font-size:14.8px;font-weight:400;letter-spacing:0.676px;color:#0dcaf0;">629</span>
<div class="badge" style="top:776px"></div>
<span class="t" style="left:1218.28px;top:775px;font-size:11.2px;font-weight:700;letter-spacing:0.661px;color:#fff;">deployed</span>
<div class="row" style="top:803px"></div>
<div class="cb" style="top:816px"></div>
<svg class="i" style="left:77.20px;top:816.00px;width:14px;height:14px" viewBox="0 0 16 16" fill="#000"><path d="M.54 3.87.5 3a2 2 0 0 1 2-2h3.672a2 2 0 0 1 1.414.586l.828.828A2 2 0 0 0 9.828 3h3.982a2 2 0 0 1 1.992 2.181l-.637 7A2 2 0 0 1 13.174 14H2.826a2 2 0 0 1-1.991-1.819l-.637-7a2 2 0 0 1 .342-1.31zM2.19 4a1 1 0 0 0-.996 1.09l.637 7a1 1 0 0 0 .995.91h10.348a1 1 0 0 0 .995-.91l.637-7A1 1 0 0 0 13.81 4zm4.69-1.707A1 1 0 0 0 6.172 2H2.5a1 1 0 0 0-1 .981l.006.139q.323-.119.684-.12h5.396z"/></svg>
<span class="t" style="left:98.80px;top:814px;font-size:14.8px;font-weight:400;letter-spacing:0.398px;color:#000;">Safetica</span>
<div class="row" style="top:841px"></div>
<div class="cb" style="top:854px"></div>
<svg class="i" style="left:77.20px;top:854.00px;width:14px;height:14px" viewBox="0 0 16 16" fill="#000"><path d="M14 4.5V14a2 2 0 0 1-2 2H4a2 2 0 0 1-2-2V2a2 2 0 0 1 2-2h5.5zm-3 0A1.5 1.5 0 0 1 9.5 3V1H4a1 1 0 0 0-1 1v12a1 1 0 0 0 1 1h8a1 1 0 0 0 1-1V4.5z"/></svg>
<span class="t" style="left:98.80px;top:852px;font-size:14.8px;font-weight:400;letter-spacing:0.480px;color:#3459e6;">Symantec Endpoint Protection/Repeated Suspicious Activity Detected</span>
<div class="hdr"></div>
<svg class="i" style="left:24.90px;top:26.70px;width:19.2px;height:19.2px" viewBox="0 0 16 16" fill="#000"><path d="M4 6a2 2 0 1 1 0 4 2 2 0 0 1 0-4m2.625.547a3 3 0 0 0-5.584.953H.5a.5.5 0 0 0 0 1h.541A3 3 0 0 0 7 8a1 1 0 0 1 2 0 3 3 0 0 0 5.959.5h.541a.5.5 0 0 0 0-1h-.541a3 3 0 0 0-5.584-.953A2 2 0 0 0 8 6c-.532 0-1.016.208-1.375.547M14 8a2 2 0 1 1-4 0 2 2 0 0 1 4 0"/></svg>
<span class="t" style="left:52.50px;top:26px;font-size:20.3px;font-weight:400;letter-spacing:0.730px;color:#000;">Overview of detections and correlations</span>
<div class="apply"></div>
<span class="t" style="left:1247.74px;top:27px;font-size:15px;font-weight:400;letter-spacing:0.401px;color:#fff;">Apply</span>
</body></html>
